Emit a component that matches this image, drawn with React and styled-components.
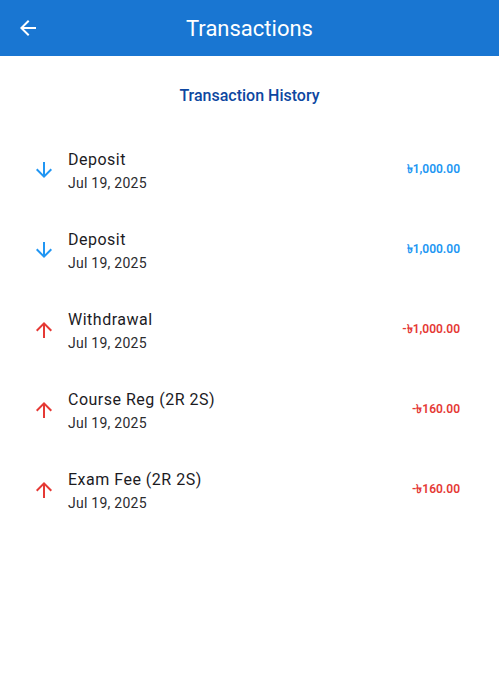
import React from "react";
import styled, { createGlobalStyle } from "styled-components";

const Global = createGlobalStyle`
  html, body { margin: 0; padding: 0; background: #fff; }
  body { font-family: Roboto, "Noto Sans", "DejaVu Sans", sans-serif; }
`;

const Page = styled.div`
  width: 499px;
  min-height: 676px;
  background: #fff;
  display: flex;
  flex-direction: column;
`;

const AppBar = styled.header`
  height: 56px;
  background: #1976d2;
  display: grid;
  grid-template-columns: 56px 1fr 56px;
  align-items: center;
  color: #fff;
`;

const BackButton = styled.button`
  border: 0;
  background: transparent;
  padding: 0 0 0 16px;
  height: 56px;
  display: flex;
  align-items: center;
  color: #fff;
  cursor: pointer;
`;

const Title = styled.h1`
  margin: 0;
  font-size: 22px;
  font-weight: 400;
  text-align: center;
  letter-spacing: 0;
`;

const Body = styled.main`
  padding: 16px 16px 0 16px;
  display: flex;
  flex-direction: column;
`;

const SectionTitle = styled.h2`
  margin: 13px 0 0 0;
  height: 22px;
  line-height: 22px;
  font-size: 16px;
  font-weight: 500;
  color: #0d47a1;
  text-align: center;
`;

const List = styled.ul`
  list-style: none;
  margin: 23px 0 0 0;
  padding: 0;
  display: flex;
  flex-direction: column;
`;

const Row = styled.li`
  height: 80px;
  display: flex;
  align-items: center;
  padding: 0 23px 0 16px;
`;

const IconBox = styled.span`
  width: 24px;
  height: 24px;
  display: flex;
  color: ${(p) => (p.$credit ? "#2196f3" : "#e53935")};
  margin-right: 12px;
`;

const Texts = styled.div`
  flex: 1;
  display: flex;
  flex-direction: column;
  gap: 2px;
  padding-top: 1px;
`;

const Name = styled.div`
  font-size: 16px;
  line-height: 22px;
  letter-spacing: 0.5px;
  color: #1c1b1f;
`;

const DateText = styled.div`
  font-size: 14px;
  line-height: 20px;
  letter-spacing: 0.25px;
  color: #2b2b2f;
`;

const Amount = styled.div`
  font-size: 12px;
  font-weight: 600;
  color: ${(p) => (p.$credit ? "#2196f3" : "#e53935")};
`;

const Arrow = ({ up }) => (
  <svg width="24" height="24" viewBox="0 0 24 24" fill="currentColor">
    <path
      d={
        up
          ? "M4 12l1.41 1.41L11 7.83V20h2V7.83l5.58 5.59L20 12l-8-8-8 8z"
          : "M20 12l-1.41-1.41L13 16.17V4h-2v12.17l-5.58-5.59L4 12l8 8 8-8z"
      }
    />
  </svg>
);

const data = [
  { name: "Deposit", date: "Jul 19, 2025", amount: "৳1,000.00", credit: true },
  { name: "Deposit", date: "Jul 19, 2025", amount: "৳1,000.00", credit: true },
  { name: "Withdrawal", date: "Jul 19, 2025", amount: "-৳1,000.00", credit: false },
  { name: "Course Reg (2R 2S)", date: "Jul 19, 2025", amount: "-৳160.00", credit: false },
  { name: "Exam Fee (2R 2S)", date: "Jul 19, 2025", amount: "-৳160.00", credit: false },
];

export default function App() {
  return (
    <Page>
      <Global />
      <AppBar>
        <BackButton aria-label="Back">
          <svg width="24" height="24" viewBox="0 0 24 24" fill="currentColor">
            <path d="M20 11H7.83l5.59-5.59L12 4l-8 8 8 8 1.41-1.41L7.83 13H20v-2z" />
          </svg>
        </BackButton>
        <Title>Transactions</Title>
        <span />
      </AppBar>
      <Body>
        <SectionTitle>Transaction History</SectionTitle>
        <List>
          {data.map((t, i) => (
            <Row key={i}>
              <IconBox $credit={t.credit}>
                <Arrow up={!t.credit} />
              </IconBox>
              <Texts>
                <Name>{t.name}</Name>
                <DateText>{t.date}</DateText>
              </Texts>
              <Amount $credit={t.credit}>{t.amount}</Amount>
            </Row>
          ))}
        </List>
      </Body>
    </Page>
  );
}
